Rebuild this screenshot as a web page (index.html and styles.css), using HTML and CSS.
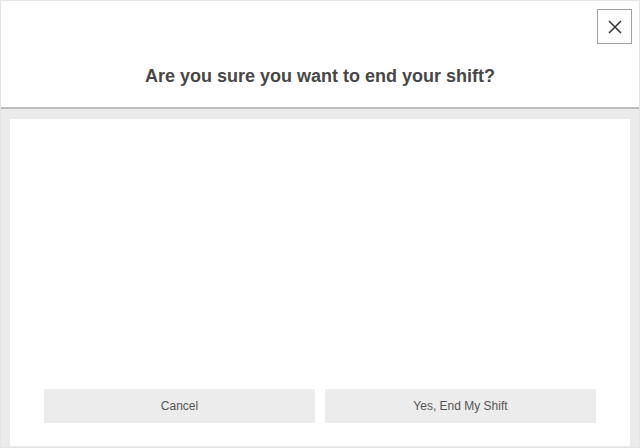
FILE: index.html
```html
<!DOCTYPE html>
<html>
<head>
<meta charset="utf-8">
<link rel="stylesheet" href="styles.css">
</head>
<body>
<div class="app">
  <header class="header">
    <button class="close" aria-label="Close">
      <svg width="14" height="14" viewBox="0 0 14 14"><path d="M1 1L13 13M13 1L1 13" stroke="#333" stroke-width="1.5" fill="none"/></svg>
    </button>
    <h1 class="title">Are you sure you want to end your shift?</h1>
  </header>
  <main class="main">
    <section class="panel">
      <div class="actions">
        <button class="btn">Cancel</button>
        <button class="btn">Yes, End My Shift</button>
      </div>
    </section>
  </main>
</div>
</body>
</html>
```
FILE: styles.css
```css
html, body { margin: 0; padding: 0; }
body { font-family: "Liberation Sans", Arial, sans-serif; background: #fff; }
.app {
  width: 640px; height: 448px; box-sizing: border-box;
  border: 1px solid #e4e4e4;
  display: flex; flex-direction: column;
}
.header {
  height: 108px; flex: none; box-sizing: border-box;
  border-bottom: 2px solid #bdbdbd;
  display: flex; flex-direction: column; align-items: center;
  padding-top: 8px;
}
.close {
  align-self: flex-end; margin-right: 7px;
  width: 35px; height: 35px; box-sizing: border-box;
  border: 1px solid #a0a0a0; background: #fff; padding: 0;
  display: flex; align-items: center; justify-content: center;
}
.title {
  margin: 21px 0 0; font-size: 18px; font-weight: 700; color: #474747;
  line-height: 22px;
}
.main {
  flex: 1; background: #ebebeb; padding: 10px 9px 1px;
  display: flex;
}
.panel {
  flex: 1; background: #fff;
  display: flex; flex-direction: column; justify-content: flex-end;
  padding: 0 34px 23px;
}
.actions { display: flex; gap: 10px; }
.btn {
  flex: 1; height: 34px; border: 0; background: #ececec;
  font-family: "Liberation Sans", Arial, sans-serif; font-size: 12px; color: #555;
}
```
